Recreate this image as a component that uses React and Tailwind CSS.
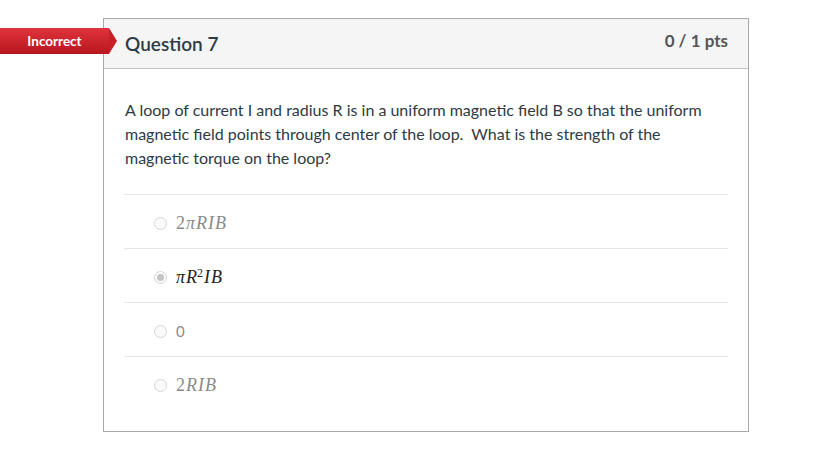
import React from 'react';

const answers = [
  { key: 'a', content: <><span>2</span><i>πRIB</i></>, selected: false },
  { key: 'b', content: <><i>πR</i><span className="inline-block text-[12px] not-italic -translate-y-[6px] -ml-[1px]">2</span><i>IB</i></>, selected: true },
  { key: 'c', content: <span className="font-['Lato',sans-serif] text-[15px] tracking-normal">0</span>, selected: false },
  { key: 'd', content: <><span>2</span><i>RIB</i></>, selected: false },
];

function Radio({ selected }) {
  return (
    <span className="w-[13px] h-[13px] rounded-full border border-[#d6d6d6] bg-[#fafafa] flex items-center justify-center shrink-0">
      {selected && <span className="w-[7px] h-[7px] rounded-full bg-[#c4c4c4]" />}
    </span>
  );
}

export default function App() {
  return (
    <div className="relative w-[835px] h-[455px] bg-white font-['Lato',sans-serif] pt-[18px]">
      <div className="absolute left-0 top-[28px] flex items-center">
        <div className="h-[26px] w-[109px] bg-gradient-to-b from-[#e0323c] to-[#b8161f] flex items-center justify-center text-white text-[13.5px] font-bold">
          Incorrect
        </div>
        <div className="w-0 h-0 border-y-[13px] border-y-transparent border-l-[8px] border-l-[#c81f28]" />
      </div>
      <div className="ml-[103px] w-[646px] h-[414px] border border-[#a9a9a9]">
        <div className="h-[50px] bg-[#f5f5f5] border-b border-[#c4c4c4] flex items-center justify-between pl-[21px] pr-[20px]">
          <h2 className="text-[19px] font-semibold text-[#2d3b45] mt-[2px]">Question 7</h2>
          <span className="text-[17px] font-bold text-[#555] -mt-[5px]">0 / 1 pts</span>
        </div>
        <div className="px-[20px] pt-[29px]">
          <p className="text-[16px] leading-[24px] text-[#2d3b45] pl-[1px]">
            A loop of current I and radius R is in a uniform magnetic field B so that the uniform magnetic field points through center of the loop.&nbsp; What is the strength of the magnetic torque on the loop?
          </p>
          <div className="mt-[24px]">
            {answers.map((a) => (
              <div
                key={a.key}
                className="h-[54px] flex items-center gap-[9px] pl-[30px] pt-[4px] border-t border-[#e6e6e6]"
              >
                <Radio selected={a.selected} />
                <span className={`font-['Liberation_Serif',serif] text-[18px] tracking-[1px] ${a.selected ? 'text-[#222]' : 'text-[#8a8a8a]'}`}>
                  {a.content}
                </span>
              </div>
            ))}
          </div>
        </div>
      </div>
    </div>
  );
}
